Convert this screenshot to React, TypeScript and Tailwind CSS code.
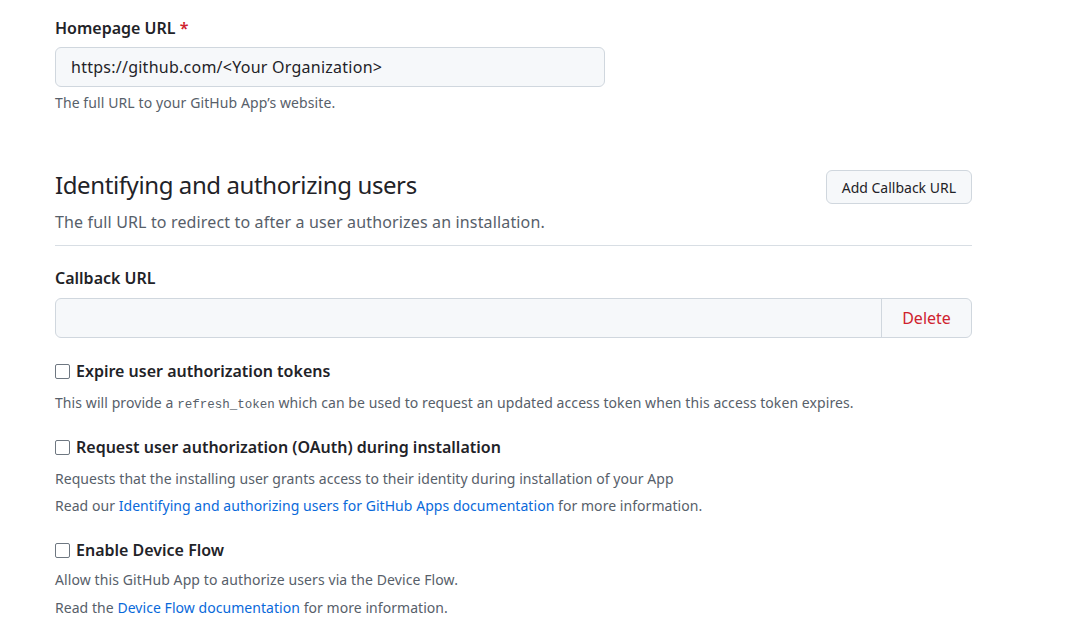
export default function App() {
  const font = { fontFamily: '"Noto Sans", "Liberation Sans", sans-serif' };
  return (
    <div style={font} className="min-h-screen bg-white text-[#1f2328]">
      <div className="ml-[55px] w-[917px] pt-[16px]">
        <label className="block text-[16px] leading-[24px] font-semibold">
          Homepage URL <span className="text-[#cf222e]">*</span>
        </label>
        <div className="mt-[7px] flex h-[40px] w-[550px] items-center rounded-[6px] border border-[#d0d7de] bg-[#f6f8fa] px-[15px] text-[16px] tracking-[0.25px]">
          https://github.com/&lt;Your Organization&gt;
        </div>
        <p className="mt-[5px] text-[14px] leading-[21px] tracking-[0.1px] text-[#57606a]">
          The full URL to your GitHub App’s website.
        </p>

        <div className="mt-[57px] flex items-start justify-between">
          <h2 className="text-[24px] leading-[30px] font-normal tracking-[-0.4px]">
            Identifying and authorizing users
          </h2>
          <button className="h-[34px] rounded-[6px] border border-[#d0d7de] bg-[#f6f8fa] px-[15px] text-[14px]">
            Add Callback URL
          </button>
        </div>
        <p className="mt-[6px] text-[16px] leading-[24px] tracking-[0.15px] text-[#57606a]">
          The full URL to redirect to after a user authorizes an installation.
        </p>
        <div className="mt-[11px] border-t border-[#d8dee4]" />

        <label className="mt-[20px] block text-[16px] leading-[24px] font-semibold">
          Callback URL
        </label>
        <div className="mt-[8px] flex h-[40px] rounded-[6px] border border-[#d0d7de] bg-[#f6f8fa]">
          <div className="flex-1" />
          <button className="w-[90px] border-l border-[#d0d7de] text-[16px] text-[#cf222e]">
            Delete
          </button>
        </div>

        <CheckRow className="mt-[21px]" title="Expire user authorization tokens">
          <p className="mt-[9px] text-[14px] leading-[21px] tracking-[0.08px] text-[#57606a]">
            This will provide a{" "}
            <code className="font-['Liberation_Mono',monospace] text-[12.5px] tracking-normal">refresh_token</code>{" "}
            which can be used to request an updated access token when this access token expires.
          </p>
        </CheckRow>

        <CheckRow
          className="mt-[19px]"
          title="Request user authorization (OAuth) during installation"
        >
          <p className="mt-[9px] text-[14px] leading-[21px] tracking-[0.05px] text-[#57606a]">
            Requests that the installing user grants access to their identity during installation of your App
          </p>
          <p className="mt-[6px] text-[14px] leading-[21px] tracking-[0.05px] text-[#57606a]">
            Read our{" "}
            <a className="text-[#0969da]">Identifying and authorizing users for GitHub Apps documentation</a>{" "}
            for more information.
          </p>
        </CheckRow>

        <CheckRow className="mt-[22px]" title="Enable Device Flow">
          <p className="mt-[7px] text-[14px] leading-[21px] tracking-[0.1px] text-[#57606a]">
            Allow this GitHub App to authorize users via the Device Flow.
          </p>
          <p className="mt-[7px] text-[14px] leading-[21px] tracking-[0.05px] text-[#57606a]">
            Read the <a className="text-[#0969da]">Device Flow documentation</a> for more information.
          </p>
        </CheckRow>
      </div>
    </div>
  );
}

function CheckRow({
  title,
  className,
  children,
}: {
  title: string;
  className?: string;
  children: React.ReactNode;
}) {
  return (
    <div className={className}>
      <label className="flex items-center gap-[6px] text-[16px] leading-[24px] font-semibold">
        <span className="h-[15px] w-[15px] rounded-[2px] border-[1.5px] border-[#6e7781] bg-white" />
        {title}
      </label>
      {children}
    </div>
  );
}
